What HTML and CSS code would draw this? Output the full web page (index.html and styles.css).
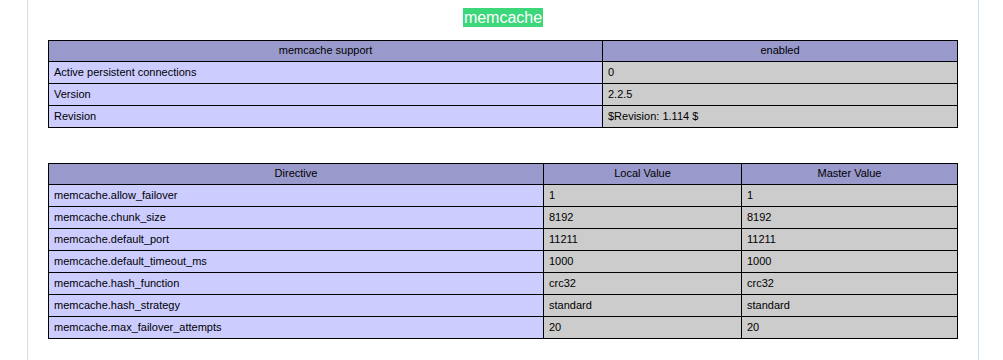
FILE: index.html
```html
<!DOCTYPE html>
<html>
<head>
<meta charset="utf-8">
<title>memcache</title>
<link rel="stylesheet" href="styles.css">
</head>
<body>
<div class="page">
  <h2 class="title"><span class="title-tag">memcache</span></h2>
  <table class="info">
    <colgroup><col class="c-support"><col></colgroup>
    <tr class="head"><th>memcache support</th><th>enabled</th></tr>
    <tr><td class="key">Active persistent connections</td><td class="val">0</td></tr>
    <tr><td class="key">Version</td><td class="val">2.2.5</td></tr>
    <tr><td class="key">Revision</td><td class="val">$Revision: 1.114 $</td></tr>
  </table>
  <table class="info second">
    <colgroup><col class="c-dir"><col class="c-local"><col></colgroup>
    <tr class="head"><th>Directive</th><th>Local Value</th><th>Master Value</th></tr>
    <tr><td class="key">memcache.allow_failover</td><td class="val">1</td><td class="val">1</td></tr>
    <tr><td class="key">memcache.chunk_size</td><td class="val">8192</td><td class="val">8192</td></tr>
    <tr><td class="key">memcache.default_port</td><td class="val">11211</td><td class="val">11211</td></tr>
    <tr><td class="key">memcache.default_timeout_ms</td><td class="val">1000</td><td class="val">1000</td></tr>
    <tr><td class="key">memcache.hash_function</td><td class="val">crc32</td><td class="val">crc32</td></tr>
    <tr><td class="key">memcache.hash_strategy</td><td class="val">standard</td><td class="val">standard</td></tr>
    <tr><td class="key">memcache.max_failover_attempts</td><td class="val">20</td><td class="val">20</td></tr>
  </table>
</div>
</body>
</html>
```
FILE: styles.css
```css
html, body {
  margin: 0;
  padding: 0;
  background: #ffffff;
  height: 100%;
}
body {
  font-family: "Liberation Sans", Arial, sans-serif;
  font-size: 11px;
  color: #000000;
  overflow: hidden;
}
.page {
  margin-left: 27px;
  width: 950px;
  min-height: 100%;
  border-left: 1px solid #d3dfe6;
  border-right: 1px solid #c6def0;
  padding-top: 8px;
  box-sizing: content-box;
}
.title {
  margin: 0 0 13px 0;
  text-align: center;
  font-size: 16px;
  font-weight: normal;
  line-height: 19px;
  height: 19px;
}
.title-tag {
  display: inline-block;
  background: #3cd67b;
  color: #ffffff;
  padding: 0 1px;
}
.info {
  border-collapse: collapse;
  width: 910px;
  margin: 0 auto;
  table-layout: fixed;
}
.info.second {
  margin-top: 35px;
}
.info th, .info td {
  border: 1px solid #000000;
  line-height: 13px;
  font-weight: normal;
  font-size: 11px;
}
.info th {
  background: #9999cc;
  text-align: center;
  padding: 3px 5px 4px;
}
.info td {
  padding: 4px 5px;
  text-align: left;
}
.info td.key {
  background: #ccccff;
}
.info td.val {
  background: #cccccc;
}
.c-support { width: 554px; }
.c-dir { width: 495px; }
.c-local { width: 198px; }
```
